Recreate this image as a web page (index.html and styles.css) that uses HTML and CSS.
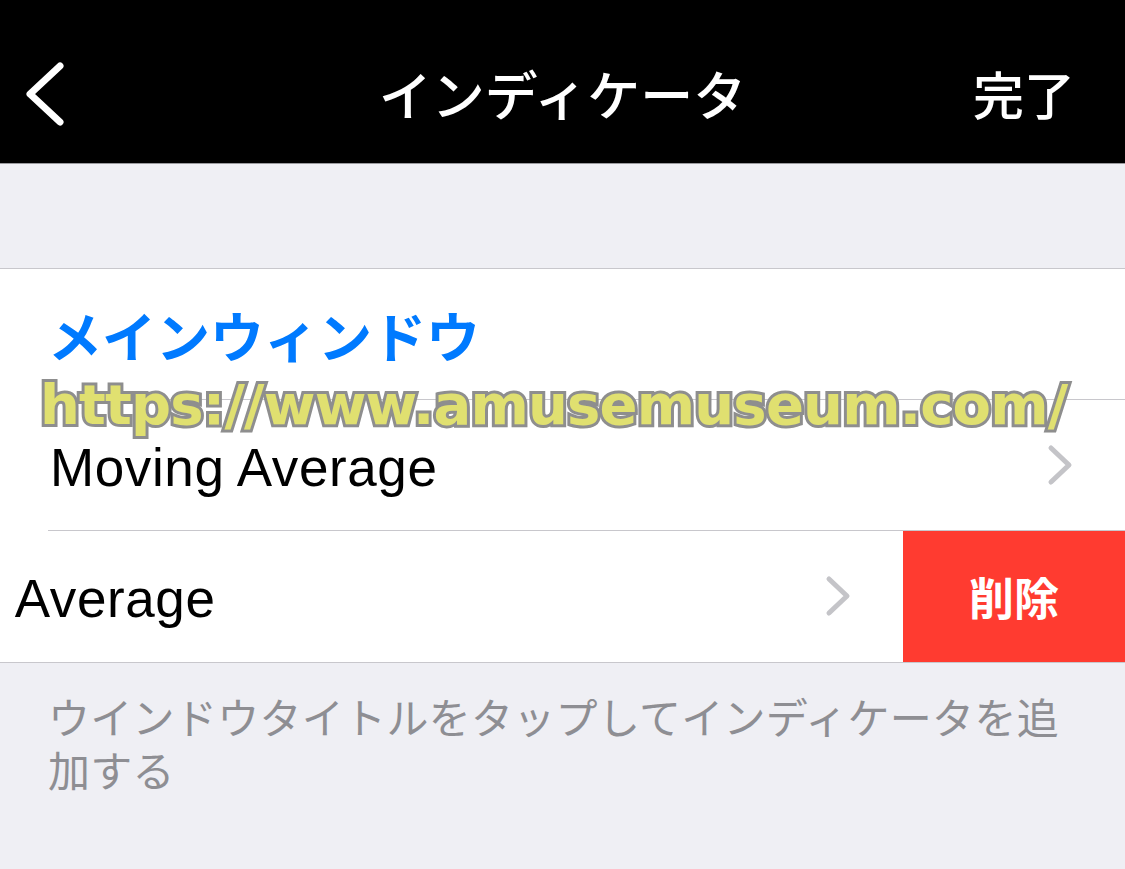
FILE: index.html
```html
<!DOCTYPE html>
<html lang="ja">
<head>
  <meta charset="UTF-8" />
  <meta name="viewport" content="width=device-width, initial-scale=1.0"/>
  <title>インディケータ</title>
  <link rel="stylesheet" href="styles.css">
</head>
<body>
  <div class="nav">
    <div class="nav-left">
      <svg class="back" width="44" height="70" viewBox="0 0 44 70">
        <polyline points="34,4 4,32 34,60" fill="none" stroke="#fff" stroke-width="7" stroke-linecap="round" stroke-linejoin="round"/>
      </svg>
    </div>
    <div class="nav-title">インディケータ</div>
    <div class="nav-right">完了</div>
  </div>

  <div class="spacer"></div>

  <div class="section">
    <div class="cell cell-head">
      <span class="window-title">メインウィンドウ</span>
    </div>
    <div class="cell">
      <span class="label">Moving Average</span>
      <svg class="chev" width="28" height="42" viewBox="0 0 28 42">
        <polyline points="4,4 22,21 4,38" fill="none" stroke="#c4c4c8" stroke-width="5" stroke-linecap="round" stroke-linejoin="round"/>
      </svg>
    </div>
    <div class="cell swiped">
      <div class="swipe-content">
        <span class="label">Moving Average</span>
        <svg class="chev" width="28" height="42" viewBox="0 0 28 42">
          <polyline points="4,4 22,21 4,38" fill="none" stroke="#c4c4c8" stroke-width="5" stroke-linecap="round" stroke-linejoin="round"/>
        </svg>
      </div>
      <div class="delete">削除</div>
    </div>
  </div>

  <div class="footer">ウインドウタイトルをタップしてインディケータを追加する</div>

  <div class="watermark">https://www.amusemuseum.com/</div>
</body>
</html>
```

FILE: styles.css
```css
body {
  margin: 0;
  background: #efeff4;
  font-family: "Noto Sans CJK JP", "Liberation Sans", sans-serif;
  position: relative;
  overflow: hidden;
}
.nav {
  height: 163px;
  background: #000;
  border-bottom: 1px solid #9a9a9e;
  display: grid;
  grid-template-columns: 1fr auto 1fr;
  align-items: center;
  color: #fff;
}
.nav-left {
  padding-left: 26px;
  display: flex;
  align-items: center;
  padding-top: 30px;
}
.nav-title {
  font-size: 53px;
  font-weight: 500;
  padding-top: 22px;
}
.nav-right {
  justify-self: end;
  padding-right: 50px;
  padding-top: 22px;
  font-size: 51px;
  font-weight: 500;
}
.spacer {
  height: 104px;
}
.section {
  background: #fff;
  border-top: 1px solid #c8c7cc;
  border-bottom: 1px solid #c8c7cc;
}
.cell {
  height: 130px;
  display: flex;
  align-items: center;
  padding-left: 48px;
  padding-right: 50px;
  position: relative;
}
.cell + .cell {
  border-top: 1px solid #c8c7cc;
  margin-left: 48px;
  padding-left: 0;
}
.window-title {
  color: #007aff;
  font-size: 54px;
  font-weight: 700;
}
.label {
  flex: 1;
  font-family: "Liberation Sans", sans-serif;
  font-size: 53px;
  letter-spacing: 0.6px;
  color: #000;
  padding-left: 2px;
  padding-top: 4px;
}
.chev {
  flex-shrink: 0;
}
.cell.swiped {
  margin-left: 0;
  padding: 0;
  overflow: hidden;
  border-top: none;
  height: 132px;
}
.cell.swiped::before {
  content: "";
  position: absolute;
  top: 0;
  left: 48px;
  right: 0;
  border-top: 1px solid #c8c7cc;
}
.swipe-content {
  flex-shrink: 0;
  width: 1125px;
  box-sizing: border-box;
  margin-left: -222px;
  padding-left: 48px;
  padding-right: 50px;
  height: 100%;
  display: flex;
  align-items: center;
}
.delete {
  flex-shrink: 0;
  width: 222px;
  height: 100%;
  margin-top: 1px;
  background: #ff3b30;
  color: #fff;
  font-size: 45px;
  font-weight: 700;
  display: flex;
  align-items: center;
  justify-content: center;
}
.footer {
  padding: 26px 60px 0 48px;
  font-size: 42px;
  letter-spacing: 0.3px;
  line-height: 53px;
  color: #8e8e93;
}
.watermark {
  position: absolute;
  top: 372px;
  left: 40px;
  font-family: "DejaVu Sans", sans-serif;
  font-weight: 700;
  font-size: 56px;
  letter-spacing: -0.8px;
  color: #e0e070;
  -webkit-text-stroke: 6px #8e8e8e;
  paint-order: stroke fill;
  white-space: nowrap;
}
```
